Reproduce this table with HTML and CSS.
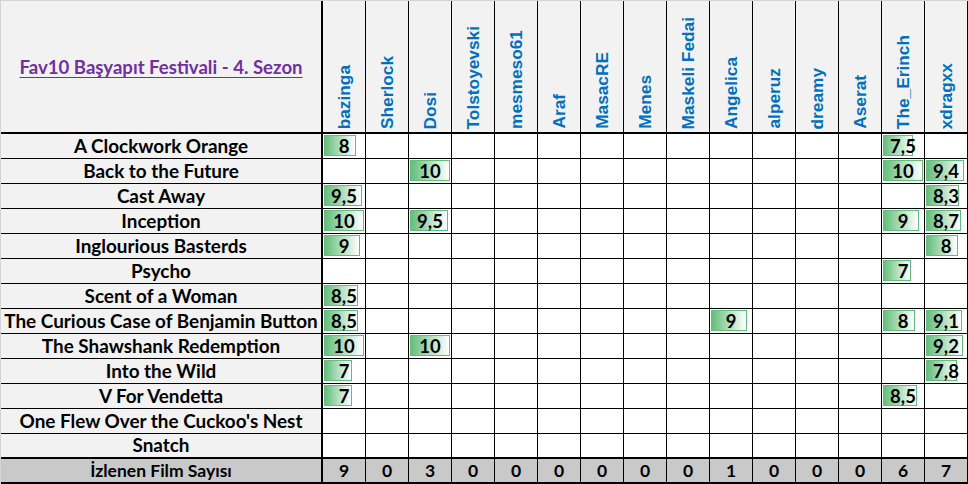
FILE: index.html
```html
<!DOCTYPE html>
<html lang="tr">
<head>
<meta charset="utf-8">
<title>Fav10 Başyapıt Festivali - 4. Sezon</title>
<link rel="stylesheet" href="styles.css">
</head>
<body>
<div class="sheet">
  <div class="row head">
    <div class="lab"><span class="title">Fav10 Başyapıt Festivali - 4. Sezon</span></div>
    <div class="user"><span>bazinga</span></div>
    <div class="user"><span>Sherlock</span></div>
    <div class="user"><span>Dosi</span></div>
    <div class="user"><span>Tolstoyevski</span></div>
    <div class="user"><span>mesmeso61</span></div>
    <div class="user"><span>Araf</span></div>
    <div class="user"><span>MasacRE</span></div>
    <div class="user"><span>Menes</span></div>
    <div class="user"><span>Maskeli Fedai</span></div>
    <div class="user"><span>Angelica</span></div>
    <div class="user"><span>alperuz</span></div>
    <div class="user"><span>dreamy</span></div>
    <div class="user"><span>Aserat</span></div>
    <div class="user"><span>The_Erinch</span></div>
    <div class="user"><span>xdragxx</span></div>
  </div>

  <div class="row">
    <div class="lab">A Clockwork Orange</div>
    <div class="d"><span class="bar" style="width:32px"></span><span class="v">8</span></div>
    <div></div><div></div><div></div><div></div><div></div><div></div><div></div><div></div><div></div><div></div><div></div><div></div>
    <div class="d"><span class="bar" style="width:30px"></span><span class="v">7,5</span></div>
    <div></div>
  </div>

  <div class="row">
    <div class="lab">Back to the Future</div>
    <div></div><div></div>
    <div class="d"><span class="bar" style="width:40px"></span><span class="v">10</span></div>
    <div></div><div></div><div></div><div></div><div></div><div></div><div></div><div></div><div></div><div></div>
    <div class="d"><span class="bar" style="width:40px"></span><span class="v">10</span></div>
    <div class="d"><span class="bar" style="width:37.6px"></span><span class="v">9,4</span></div>
  </div>

  <div class="row">
    <div class="lab">Cast Away</div>
    <div class="d"><span class="bar" style="width:38px"></span><span class="v">9,5</span></div>
    <div></div><div></div><div></div><div></div><div></div><div></div><div></div><div></div><div></div><div></div><div></div><div></div><div></div>
    <div class="d"><span class="bar" style="width:33.2px"></span><span class="v">8,3</span></div>
  </div>

  <div class="row">
    <div class="lab">Inception</div>
    <div class="d"><span class="bar" style="width:40px"></span><span class="v">10</span></div>
    <div></div>
    <div class="d"><span class="bar" style="width:38px"></span><span class="v">9,5</span></div>
    <div></div><div></div><div></div><div></div><div></div><div></div><div></div><div></div><div></div><div></div>
    <div class="d"><span class="bar" style="width:36px"></span><span class="v">9</span></div>
    <div class="d"><span class="bar" style="width:34.8px"></span><span class="v">8,7</span></div>
  </div>

  <div class="row">
    <div class="lab">Inglourious Basterds</div>
    <div class="d"><span class="bar" style="width:36px"></span><span class="v">9</span></div>
    <div></div><div></div><div></div><div></div><div></div><div></div><div></div><div></div><div></div><div></div><div></div><div></div><div></div>
    <div class="d"><span class="bar" style="width:32px"></span><span class="v">8</span></div>
  </div>

  <div class="row">
    <div class="lab">Psycho</div>
    <div></div><div></div><div></div><div></div><div></div><div></div><div></div><div></div><div></div><div></div><div></div><div></div><div></div>
    <div class="d"><span class="bar" style="width:28px"></span><span class="v">7</span></div>
    <div></div>
  </div>

  <div class="row">
    <div class="lab">Scent of a Woman</div>
    <div class="d"><span class="bar" style="width:34px"></span><span class="v">8,5</span></div>
    <div></div><div></div><div></div><div></div><div></div><div></div><div></div><div></div><div></div><div></div><div></div><div></div><div></div><div></div>
  </div>

  <div class="row">
    <div class="lab">The Curious Case of Benjamin Button</div>
    <div class="d"><span class="bar" style="width:34px"></span><span class="v">8,5</span></div>
    <div></div><div></div><div></div><div></div><div></div><div></div><div></div><div></div>
    <div class="d"><span class="bar" style="width:36px"></span><span class="v">9</span></div>
    <div></div><div></div><div></div>
    <div class="d"><span class="bar" style="width:32px"></span><span class="v">8</span></div>
    <div class="d"><span class="bar" style="width:36.4px"></span><span class="v">9,1</span></div>
  </div>

  <div class="row">
    <div class="lab">The Shawshank Redemption</div>
    <div class="d"><span class="bar" style="width:40px"></span><span class="v">10</span></div>
    <div></div>
    <div class="d"><span class="bar" style="width:40px"></span><span class="v">10</span></div>
    <div></div><div></div><div></div><div></div><div></div><div></div><div></div><div></div><div></div><div></div><div></div>
    <div class="d"><span class="bar" style="width:36.8px"></span><span class="v">9,2</span></div>
  </div>

  <div class="row">
    <div class="lab">Into the Wild</div>
    <div class="d"><span class="bar" style="width:28px"></span><span class="v">7</span></div>
    <div></div><div></div><div></div><div></div><div></div><div></div><div></div><div></div><div></div><div></div><div></div><div></div><div></div>
    <div class="d"><span class="bar" style="width:31.2px"></span><span class="v">7,8</span></div>
  </div>

  <div class="row">
    <div class="lab">V For Vendetta</div>
    <div class="d"><span class="bar" style="width:28px"></span><span class="v">7</span></div>
    <div></div><div></div><div></div><div></div><div></div><div></div><div></div><div></div><div></div><div></div><div></div><div></div>
    <div class="d"><span class="bar" style="width:34px"></span><span class="v">8,5</span></div>
    <div></div>
  </div>

  <div class="row">
    <div class="lab">One Flew Over the Cuckoo's Nest</div>
    <div></div><div></div><div></div><div></div><div></div><div></div><div></div><div></div><div></div><div></div><div></div><div></div><div></div><div></div><div></div>
  </div>

  <div class="row last">
    <div class="lab">Snatch</div>
    <div></div><div></div><div></div><div></div><div></div><div></div><div></div><div></div><div></div><div></div><div></div><div></div><div></div><div></div><div></div>
  </div>

  <div class="row total">
    <div class="lab">İzlenen Film Sayısı</div>
    <div>9</div><div>0</div><div>3</div><div>0</div><div>0</div><div>0</div><div>0</div><div>0</div><div>0</div><div>1</div><div>0</div><div>0</div><div>0</div><div>6</div><div>7</div>
  </div>
</div>
</body>
</html>
```

FILE: styles.css
```css
* {
  box-sizing: border-box;
  margin: 0;
  padding: 0;
}

html, body {
  background: #ffffff;
}

body {
  width: 968px;
  height: 484px;
  overflow: hidden;
}

.sheet {
  display: grid;
  grid-template-columns: 322px repeat(15, 43px);
  grid-template-rows: 133px repeat(14, 25px);
  width: 968px;
  border-top: 1px solid #d4d4d4;
  border-left: 1px solid #d4d4d4;
  font-family: Lato, "Liberation Sans", sans-serif;
  font-weight: 700;
  font-size: 18.5px;
  color: #000;
}

.row {
  display: contents;
}

.row > div {
  border-right: 1px solid #000;
  border-bottom: 1px solid #000;
  background: #ffffff;
  display: flex;
  align-items: center;
  justify-content: center;
  line-height: 1;
  white-space: nowrap;
}

.row > .lab {
  border-right-width: 2px;
  background: #f2f2f2;
  font-size: 18.9px;
}

.head > div {
  border-bottom-width: 2px;
  background: #f2f2f2;
}

.row.last > div,
.total > div {
  border-bottom-width: 2px;
}

.total > div {
  background: #c9c9c9;
  font-size: 17.5px;
}

.total > .lab {
  background: #c9c9c9;
  font-size: 17.5px;
}

.title {
  color: #7030a0;
  text-decoration: underline;
  text-underline-offset: 3px;
  text-decoration-thickness: 1px;
  font-size: 18.6px;
  margin-top: 2px;
}

.head > .user {
  align-items: flex-end;
}

.user span {
  writing-mode: vertical-rl;
  transform: rotate(180deg);
  font-family: "Liberation Sans", Arial, sans-serif;
  font-weight: 700;
  font-size: 17.3px;
  line-height: 1.2;
  color: #0070c0;
  margin-bottom: 3px;
}

.row > .d {
  display: grid;
  grid-template-columns: 100%;
  grid-template-rows: 100%;
}

.bar {
  grid-area: 1 / 1;
  justify-self: start;
  align-self: stretch;
  margin: 1px 0 2px 1px;
  border: 1px solid #63be7b;
  background: linear-gradient(to right, #63be7b 0%, #ffffff 100%);
}

.v {
  grid-area: 1 / 1;
  justify-self: center;
  align-self: center;
  position: relative;
}
```
